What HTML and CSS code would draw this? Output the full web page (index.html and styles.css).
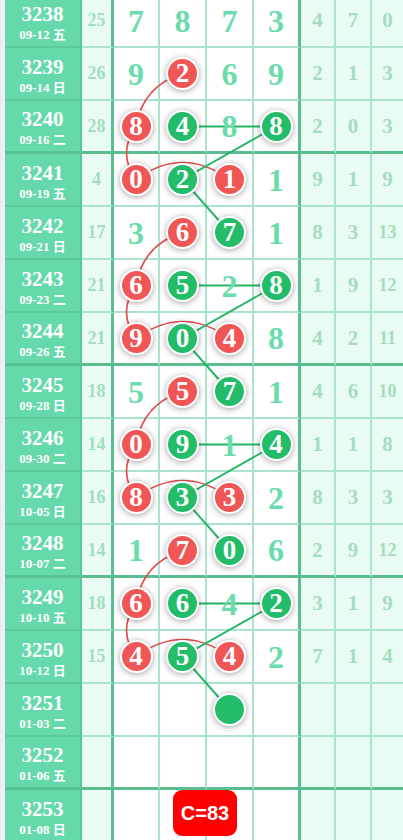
FILE: index.html
```html
<!DOCTYPE html>
<html lang="zh">
<head>
<meta charset="utf-8">
<title>走势图</title>
<link rel="stylesheet" href="styles.css">
</head>
<body>
<div class="page">
  <div class="chart">
    <div class="row">
      <div class="lbl"><span class="no">3238</span><span class="dt">09-12 <i>五</i></span></div>
      <div class="num">25</div>
      <div class="cell"><span class="v">7</span></div>
      <div class="cell"><span class="v">8</span></div>
      <div class="cell"><span class="v">7</span></div>
      <div class="cell c4"><span class="v">3</span></div>
      <div class="side">4</div><div class="side">7</div><div class="side last">0</div>
    </div>
    <div class="row">
      <div class="lbl"><span class="no">3239</span><span class="dt">09-14 <i>日</i></span></div>
      <div class="num">26</div>
      <div class="cell"><span class="v">9</span></div>
      <div class="cell"><span class="ball red">2</span></div>
      <div class="cell"><span class="v">6</span></div>
      <div class="cell c4"><span class="v">9</span></div>
      <div class="side">2</div><div class="side">1</div><div class="side last">3</div>
    </div>
    <div class="row thick">
      <div class="lbl"><span class="no">3240</span><span class="dt">09-16 <i>二</i></span></div>
      <div class="num">28</div>
      <div class="cell"><span class="ball red">8</span></div>
      <div class="cell"><span class="ball green">4</span></div>
      <div class="cell"><span class="v">8</span></div>
      <div class="cell c4"><span class="ball green">8</span></div>
      <div class="side">2</div><div class="side">0</div><div class="side last">3</div>
    </div>
    <div class="row">
      <div class="lbl"><span class="no">3241</span><span class="dt">09-19 <i>五</i></span></div>
      <div class="num">4</div>
      <div class="cell"><span class="ball red">0</span></div>
      <div class="cell"><span class="ball green">2</span></div>
      <div class="cell"><span class="ball red">1</span></div>
      <div class="cell c4"><span class="v">1</span></div>
      <div class="side">9</div><div class="side">1</div><div class="side last">9</div>
    </div>
    <div class="row">
      <div class="lbl"><span class="no">3242</span><span class="dt">09-21 <i>日</i></span></div>
      <div class="num">17</div>
      <div class="cell"><span class="v">3</span></div>
      <div class="cell"><span class="ball red">6</span></div>
      <div class="cell"><span class="ball green">7</span></div>
      <div class="cell c4"><span class="v">1</span></div>
      <div class="side">8</div><div class="side">3</div><div class="side last two">13</div>
    </div>
    <div class="row">
      <div class="lbl"><span class="no">3243</span><span class="dt">09-23 <i>二</i></span></div>
      <div class="num">21</div>
      <div class="cell"><span class="ball red">6</span></div>
      <div class="cell"><span class="ball green">5</span></div>
      <div class="cell"><span class="v">2</span></div>
      <div class="cell c4"><span class="ball green">8</span></div>
      <div class="side">1</div><div class="side">9</div><div class="side last two">12</div>
    </div>
    <div class="row thick">
      <div class="lbl"><span class="no">3244</span><span class="dt">09-26 <i>五</i></span></div>
      <div class="num">21</div>
      <div class="cell"><span class="ball red">9</span></div>
      <div class="cell"><span class="ball green">0</span></div>
      <div class="cell"><span class="ball red">4</span></div>
      <div class="cell c4"><span class="v">8</span></div>
      <div class="side">4</div><div class="side">2</div><div class="side last two">11</div>
    </div>
    <div class="row">
      <div class="lbl"><span class="no">3245</span><span class="dt">09-28 <i>日</i></span></div>
      <div class="num">18</div>
      <div class="cell"><span class="v">5</span></div>
      <div class="cell"><span class="ball red">5</span></div>
      <div class="cell"><span class="ball green">7</span></div>
      <div class="cell c4"><span class="v">1</span></div>
      <div class="side">4</div><div class="side">6</div><div class="side last two">10</div>
    </div>
    <div class="row">
      <div class="lbl"><span class="no">3246</span><span class="dt">09-30 <i>二</i></span></div>
      <div class="num">14</div>
      <div class="cell"><span class="ball red">0</span></div>
      <div class="cell"><span class="ball green">9</span></div>
      <div class="cell"><span class="v">1</span></div>
      <div class="cell c4"><span class="ball green">4</span></div>
      <div class="side">1</div><div class="side">1</div><div class="side last">8</div>
    </div>
    <div class="row">
      <div class="lbl"><span class="no">3247</span><span class="dt">10-05 <i>日</i></span></div>
      <div class="num">16</div>
      <div class="cell"><span class="ball red">8</span></div>
      <div class="cell"><span class="ball green">3</span></div>
      <div class="cell"><span class="ball red">3</span></div>
      <div class="cell c4"><span class="v">2</span></div>
      <div class="side">8</div><div class="side">3</div><div class="side last">3</div>
    </div>
    <div class="row thick">
      <div class="lbl"><span class="no">3248</span><span class="dt">10-07 <i>二</i></span></div>
      <div class="num">14</div>
      <div class="cell"><span class="v">1</span></div>
      <div class="cell"><span class="ball red">7</span></div>
      <div class="cell"><span class="ball green">0</span></div>
      <div class="cell c4"><span class="v">6</span></div>
      <div class="side">2</div><div class="side">9</div><div class="side last two">12</div>
    </div>
    <div class="row">
      <div class="lbl"><span class="no">3249</span><span class="dt">10-10 <i>五</i></span></div>
      <div class="num">18</div>
      <div class="cell"><span class="ball red">6</span></div>
      <div class="cell"><span class="ball green">6</span></div>
      <div class="cell"><span class="v">4</span></div>
      <div class="cell c4"><span class="ball green">2</span></div>
      <div class="side">3</div><div class="side">1</div><div class="side last">9</div>
    </div>
    <div class="row">
      <div class="lbl"><span class="no">3250</span><span class="dt">10-12 <i>日</i></span></div>
      <div class="num">15</div>
      <div class="cell"><span class="ball red">4</span></div>
      <div class="cell"><span class="ball green">5</span></div>
      <div class="cell"><span class="ball red">4</span></div>
      <div class="cell c4"><span class="v">2</span></div>
      <div class="side">7</div><div class="side">1</div><div class="side last">4</div>
    </div>
    <div class="row">
      <div class="lbl"><span class="no">3251</span><span class="dt">01-03 <i>二</i></span></div>
      <div class="num"></div>
      <div class="cell"></div>
      <div class="cell"></div>
      <div class="cell"><span class="ball green"></span></div>
      <div class="cell c4"></div>
      <div class="side"></div><div class="side"></div><div class="side last"></div>
    </div>
    <div class="row thick">
      <div class="lbl"><span class="no">3252</span><span class="dt">01-06 <i>五</i></span></div>
      <div class="num"></div>
      <div class="cell"></div>
      <div class="cell"></div>
      <div class="cell"></div>
      <div class="cell c4"></div>
      <div class="side"></div><div class="side"></div><div class="side last"></div>
    </div>
    <div class="row">
      <div class="lbl"><span class="no">3253</span><span class="dt">01-08 <i>日</i></span></div>
      <div class="num"></div>
      <div class="cell"></div>
      <div class="cell anchor"><span class="badge">C=83</span></div>
      <div class="cell"></div>
      <div class="cell c4"></div>
      <div class="side"></div><div class="side"></div><div class="side last"></div>
    </div>

    <svg class="lines" viewBox="5 -5 398 848" width="398" height="848" xmlns="http://www.w3.org/2000/svg">
      <g class="red-l" fill="none">
        <path d="M182.5 73.5 Q142.75 86 136 126.5 Q117 153 136 179.5 Q182.75 145.5 229.5 179.5"/>
        <path d="M182.5 232.5 Q142.75 245 136 285.5 Q117 312 136 338.5 Q182.75 304.5 229.5 338.5"/>
        <path d="M182.5 391.5 Q142.75 404 136 444.5 Q117 471 136 497.5 Q182.75 463.5 229.5 497.5"/>
        <path d="M182.5 550.5 Q142.75 563 136 603.5 Q117 630 136 656.5 Q182.75 622.5 229.5 656.5"/>
      </g>
      <g class="green-l" fill="none">
        <path d="M182.5 126.5 L276 126.5 L182.5 179.5 L229.5 232.5"/>
        <path d="M182.5 285.5 L276 285.5 L182.5 338.5 L229.5 391.5"/>
        <path d="M182.5 444.5 L276 444.5 L182.5 497.5 L229.5 550.5"/>
        <path d="M182.5 603.5 L276 603.5 L182.5 656.5 L229.5 709.5"/>
      </g>
    </svg>
  </div>
</div>
</body>
</html>
```

FILE: styles.css
```css
html, body {
  margin: 0;
  padding: 0;
  background: #ffffff;
}

body {
  font-family: "Liberation Serif", "Noto Sans CJK SC", serif;
  overflow: hidden;
}

.page {
  width: 403px;
  height: 840px;
  overflow: hidden;
  box-sizing: border-box;
  padding-left: 5px;
  background: linear-gradient(to right, #e9e9e9, #f6f6f6 5px);
}

.chart {
  position: relative;
  width: 398px;
  margin-top: -5px;
}

.row {
  display: grid;
  grid-template-columns: 77px 32px 46px 47px 47px 47px 35px 36px 31px;
  height: 53px;
}

.row > div {
  box-sizing: border-box;
  border-bottom: 2px solid #aae4cd;
  display: flex;
  align-items: center;
  justify-content: center;
  min-width: 0;
}

.row.thick > div {
  border-bottom: 3px solid #5bbe91;
}

.row > .lbl {
  background: #65d9aa;
  border-right: 2px solid #58c796;
  border-bottom-color: #5cc99a;
  flex-direction: column;
  color: #ffffff;
  font-weight: bold;
  padding-top: 6px;
}

.row.thick > .lbl {
  border-bottom-color: #57c394;
}

.no {
  font-size: 21px;
  line-height: 21px;
}

.dt {
  font-size: 13px;
  line-height: 18px;
}

.dt i {
  font-style: normal;
  font-size: 13px;
  font-family: "Noto Sans CJK SC", sans-serif;
  font-weight: bold;
}

.num {
  background: #e9fcf3;
  border-right: 3px solid #5bbe91;
  color: #a5dcbf;
  font-weight: bold;
  font-size: 18px;
}

.cell {
  background: #ffffff;
  border-right: 2px solid #aae4cd;
}

.cell.c4 {
  border-right: 3px solid #5bbe91;
}

.cell.anchor {
  position: relative;
}

.side {
  background: #e9fcf3;
  border-right: 2px solid #aae4cd;
  color: #a5dcbf;
  font-weight: bold;
  font-size: 21px;
}

.side.last {
  border-right: 0;
}

.side.two {
  font-size: 18px;
}

.v {
  position: relative;
  z-index: 2;
  color: #6bdcab;
  font-weight: bold;
  font-size: 32px;
  line-height: 1;
}

.ball {
  position: relative;
  z-index: 2;
  width: 29px;
  height: 29px;
  border: 2px solid #ffffff;
  border-radius: 50%;
  display: flex;
  align-items: center;
  justify-content: center;
  color: #ffffff;
  font-weight: bold;
  font-size: 27px;
  line-height: 1;
  box-shadow: 0 1px 6px rgba(0, 0, 0, 0.38);
}

.ball.red {
  background: #f05656;
}

.ball.green {
  background: #23bd69;
}

.lines {
  position: absolute;
  left: 0;
  top: 0;
  z-index: 1;
  pointer-events: none;
}

.red-l path {
  stroke: #e44e4e;
  stroke-width: 1.7;
}

.green-l path {
  stroke: #22b566;
  stroke-width: 1.9;
}

.badge {
  position: absolute;
  z-index: 3;
  left: 13px;
  top: 0;
  width: 64px;
  height: 46px;
  border-radius: 9px;
  background: #ff0000;
  color: #ffffff;
  font-family: "Liberation Sans", Arial, sans-serif;
  font-weight: bold;
  font-size: 20px;
  line-height: 46px;
  text-align: center;
}
```
